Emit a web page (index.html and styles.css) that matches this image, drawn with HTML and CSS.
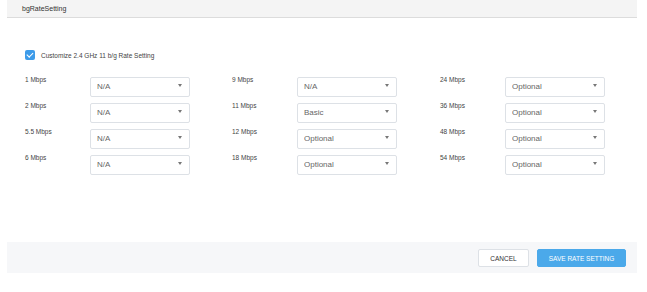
FILE: index.html
```html
<!DOCTYPE html>
<html lang="en">
<head>
<meta charset="UTF-8">
<meta name="viewport" content="width=device-width, initial-scale=1.0">
<title>bgRateSetting</title>
<link rel="stylesheet" href="styles.css">
</head>
<body>

<div class="dialog">
<div class="header">bgRateSetting</div>

<div class="content">
<label class="customize">
<input type="checkbox" checked>
<span class="box"></span>
Customize 2.4 GHz 11 b/g Rate Setting
</label>

<div class="rates">
<div class="rate"><span class="name">1 Mbps</span><div class="pick"><select><option>N/A</option><option>Basic</option><option>Optional</option></select></div></div>
<div class="rate"><span class="name">9 Mbps</span><div class="pick"><select><option>N/A</option><option>Basic</option><option>Optional</option></select></div></div>
<div class="rate"><span class="name">24 Mbps</span><div class="pick"><select><option>Optional</option><option>N/A</option><option>Basic</option></select></div></div>

<div class="rate"><span class="name">2 Mbps</span><div class="pick"><select><option>N/A</option><option>Basic</option><option>Optional</option></select></div></div>
<div class="rate"><span class="name">11 Mbps</span><div class="pick"><select><option>Basic</option><option>N/A</option><option>Optional</option></select></div></div>
<div class="rate"><span class="name">36 Mbps</span><div class="pick"><select><option>Optional</option><option>N/A</option><option>Basic</option></select></div></div>

<div class="rate"><span class="name">5.5 Mbps</span><div class="pick"><select><option>N/A</option><option>Basic</option><option>Optional</option></select></div></div>
<div class="rate"><span class="name">12 Mbps</span><div class="pick"><select><option>Optional</option><option>N/A</option><option>Basic</option></select></div></div>
<div class="rate"><span class="name">48 Mbps</span><div class="pick"><select><option>Optional</option><option>N/A</option><option>Basic</option></select></div></div>

<div class="rate"><span class="name">6 Mbps</span><div class="pick"><select><option>N/A</option><option>Basic</option><option>Optional</option></select></div></div>
<div class="rate"><span class="name">18 Mbps</span><div class="pick"><select><option>Optional</option><option>N/A</option><option>Basic</option></select></div></div>
<div class="rate"><span class="name">54 Mbps</span><div class="pick"><select><option>Optional</option><option>N/A</option><option>Basic</option></select></div></div>
</div>
</div>

<div class="footer">
<button class="cancel">CANCEL</button>
<button class="save">SAVE RATE SETTING</button>
</div>
</div>

</body>
</html>
```

FILE: styles.css
```css
body {
  margin: 0;
  background: #fff;
  font-family: "Liberation Sans", Arial, sans-serif;
  color: #333;
}
.dialog {
  width: 630px;
  margin-left: 7px;
}
.header {
  height: 17px;
  line-height: 17px;
  padding-left: 15px;
  background: #f4f4f4;
  border-bottom: 1px solid #dcdcdc;
  font-size: 7px;
  color: #333;
}
.content {
  height: 224px;
  padding: 32px 0 0 18px;
  box-sizing: border-box;
}
.customize {
  display: flex;
  align-items: center;
  gap: 6px;
  font-size: 6.5px;
  color: #444;
  height: 10px;
}
.customize input {
  display: none;
}
.box {
  width: 10px;
  height: 10px;
  border-radius: 2px;
  background: #3d9be9;
  position: relative;
}
.box::after {
  content: "";
  position: absolute;
  left: 3.3px;
  top: 1.3px;
  width: 2.5px;
  height: 5px;
  border: solid #fff;
  border-width: 0 1.5px 1.5px 0;
  transform: rotate(45deg);
}
.rates {
  margin-top: 15px;
  display: grid;
  grid-template-columns: 207px 208px 200px;
  row-gap: 6px;
}
.rate {
  display: flex;
  align-items: flex-start;
}
.name {
  width: 65px;
  padding-top: 1px;
  font-size: 6.5px;
  color: #444;
}
.pick {
  position: relative;
  width: 100px;
  height: 20px;
}
.pick select {
  appearance: none;
  width: 100%;
  height: 100%;
  border: 1px solid #dde1e6;
  border-radius: 2px;
  background: #fff;
  padding: 0 0 0 6px;
  font-family: "Liberation Sans", Arial, sans-serif;
  font-size: 8px;
  color: #666;
  outline: none;
}
.pick::after {
  content: "";
  position: absolute;
  right: 8px;
  top: 9px;
  border-left: 2.5px solid transparent;
  border-right: 2.5px solid transparent;
  border-top: 3px solid #777;
  pointer-events: none;
}
.footer {
  height: 31px;
  background: #f6f7f9;
  display: flex;
  justify-content: flex-end;
  align-items: flex-start;
  padding: 7px 11px 0 0;
  box-sizing: border-box;
  gap: 8px;
}
button {
  height: 18px;
  border-radius: 2px;
  font-family: "Liberation Sans", Arial, sans-serif;
  font-size: 6.5px;
  cursor: pointer;
  padding: 0;
}
.cancel {
  width: 51px;
  background: #fff;
  border: 1px solid #dde1e6;
  color: #333;
}
.save {
  width: 89px;
  background: #4ba9ea;
  border: 1px solid #4ba9ea;
  color: #fff;
}
```
